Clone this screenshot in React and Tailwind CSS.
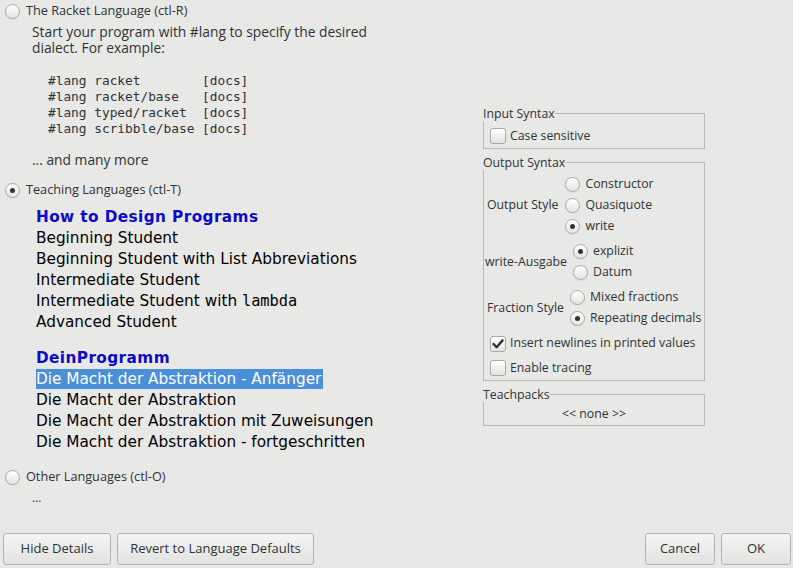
import React from 'react';

const ui = { fontFamily: '"Open Sans", "Noto Sans", sans-serif' };
const body = { fontFamily: '"DejaVu Sans", sans-serif' };
const mono = { fontFamily: '"DejaVu Sans Mono", monospace' };

const Radio = ({ checked }) => (
  <span className="inline-flex w-[15px] h-[15px] shrink-0 items-center justify-center rounded-full border border-[#a9a9a6] bg-gradient-to-b from-[#ffffff] to-[#e4e4e2] shadow-[0_1px_0_rgba(0,0,0,0.06)]">
    {checked && <span className="w-[5px] h-[5px] rounded-full bg-[#2e3436]" />}
  </span>
);

const Check = ({ checked }) => (
  <span className="inline-flex w-[16px] h-[16px] shrink-0 items-center justify-center rounded-[3px] border border-[#a9a9a6] bg-gradient-to-b from-[#ffffff] to-[#e4e4e2]">
    {checked && (
      <svg width="12" height="10" viewBox="0 0 13 11">
        <path d="M1.5 5.5 L5 9 L11.5 1.5" fill="none" stroke="#2e3436" strokeWidth="2.6" strokeLinecap="round" strokeLinejoin="round" />
      </svg>
    )}
  </span>
);

const RadioRow = ({ checked, label }) => (
  <div className="flex items-center gap-[5px] h-[21px]">
    <Radio checked={checked} />
    <span>{label}</span>
  </div>
);

const Group = ({ title, children }) => (
  <div className="flex flex-col">
    <div className="flex items-end h-[15px]">
      <span className="leading-[15px]">{title}</span>
      <div className="flex-1 h-[8px] border-t border-r border-[#b9b9b6]" />
    </div>
    <div className="border-l border-r border-b border-[#b9b9b6]">{children}</div>
  </div>
);

const Button = ({ children, className = '' }) => (
  <button className={`h-[32px] rounded-[3px] border border-[#b3b3b0] bg-gradient-to-b from-[#f4f4f3] to-[#e2e2e0] text-[13px] text-[#2e3436] ${className}`}>
    {children}
  </button>
);

export default function App() {
  return (
    <div className="w-[793px] h-[568px] bg-[#e8e8e7] text-[#2e3436] flex flex-col overflow-hidden" style={ui}>
      <div className="flex flex-1">
        {/* left: language list */}
        <div className="w-[483px] flex flex-col text-[12.7px]">
          <div className="flex items-center gap-[6px] pl-[5px] h-[22px]">
            <Radio />
            <span>The Racket Language (ctl-R)</span>
          </div>
          <div className="pl-[32px] pt-[2px] text-[13.8px] leading-[16px]">
            <p>Start your program with #lang to specify the desired</p>
            <p>dialect. For example:</p>
            <div className="h-[16px]" />
            <div className="pl-[16px] pt-[1px] text-[12.8px] leading-[16px] whitespace-pre" style={mono}>
              <div>#lang racket        [docs]</div>
              <div>#lang racket/base   [docs]</div>
              <div>#lang typed/racket  [docs]</div>
              <div>#lang scribble/base [docs]</div>
            </div>
            <div className="h-[15px]" />
            <p>... and many more</p>
          </div>
          <div className="flex items-center gap-[6px] pl-[5px] h-[22px] mt-[11px]">
            <Radio checked />
            <span>Teaching Languages (ctl-T)</span>
          </div>
          <div className="pl-[36px] pt-[6px] text-[15.3px] leading-[21px] text-black" style={body}>
            <div className="font-bold text-[#0c0cc8] tracking-[0.4px]">How to Design Programs</div>
            <div>Beginning Student</div>
            <div>Beginning Student with List Abbreviations</div>
            <div>Intermediate Student</div>
            <div>
              Intermediate Student with <span style={mono}>lambda</span>
            </div>
            <div>Advanced Student</div>
            <div className="h-[15px]" />
            <div className="font-bold text-[#0c0cc8] tracking-[0.4px]">DeinProgramm</div>
            <div>
              <span className="bg-[#4a90d9] text-white pr-[2px] py-[1px]">Die Macht der Abstraktion - Anfänger</span>
            </div>
            <div>Die Macht der Abstraktion</div>
            <div>Die Macht der Abstraktion mit Zuweisungen</div>
            <div>Die Macht der Abstraktion - fortgeschritten</div>
          </div>
          <div className="flex items-center gap-[6px] pl-[5px] h-[22px] mt-[13px]">
            <Radio />
            <span>Other Languages (ctl-O)</span>
          </div>
          <div className="pl-[32px] text-[12px] leading-[16px] mt-[2px]">...</div>
        </div>

        {/* right: details */}
        <div className="w-[222px] flex flex-col gap-[6px] pt-[106px] text-[12.3px]">
          <Group title="Input Syntax">
            <div className="flex items-center gap-[4px] pl-[6px] h-[27px] pt-[3px]">
              <Check />
              <span>Case sensitive</span>
            </div>
          </Group>
          <Group title="Output Syntax">
            <div className="flex flex-col pt-[4px]">
              <div className="flex items-center pl-[3px]">
                <span className="mr-[7px]">Output Style</span>
                <div className="flex flex-col">
                  <RadioRow label="Constructor" />
                  <RadioRow label="Quasiquote" />
                  <RadioRow checked label="write" />
                </div>
              </div>
              <div className="flex items-center pl-[1px] mt-[4px]">
                <span className="mr-[6px]">write-Ausgabe</span>
                <div className="flex flex-col">
                  <RadioRow checked label="explizit" />
                  <RadioRow label="Datum" />
                </div>
              </div>
              <div className="flex items-center pl-[3px] mt-[4px]">
                <span className="mr-[6px]">Fraction Style</span>
                <div className="flex flex-col">
                  <RadioRow label="Mixed fractions" />
                  <RadioRow checked label="Repeating decimals" />
                </div>
              </div>
              <div className="flex items-center gap-[4px] pl-[6px] h-[25px] mt-[2px]">
                <Check checked />
                <span>Insert newlines in printed values</span>
              </div>
              <div className="flex items-center gap-[4px] pl-[6px] h-[24px]">
                <Check />
                <span>Enable tracing</span>
              </div>
            </div>
          </Group>
          <Group title="Teachpacks">
            <div className="h-[23px] flex items-center justify-center pt-[1px]">&lt;&lt; none &gt;&gt;</div>
          </Group>
        </div>
      </div>

      {/* bottom buttons */}
      <div className="flex items-center pl-[3px] pr-[2px] pb-[3px] gap-[6px]">
        <Button className="w-[108px]">Hide Details</Button>
        <Button className="w-[197px]">Revert to Language Defaults</Button>
        <div className="flex-1" />
        <Button className="w-[70px]">Cancel</Button>
        <Button className="w-[70px]">OK</Button>
      </div>
    </div>
  );
}
